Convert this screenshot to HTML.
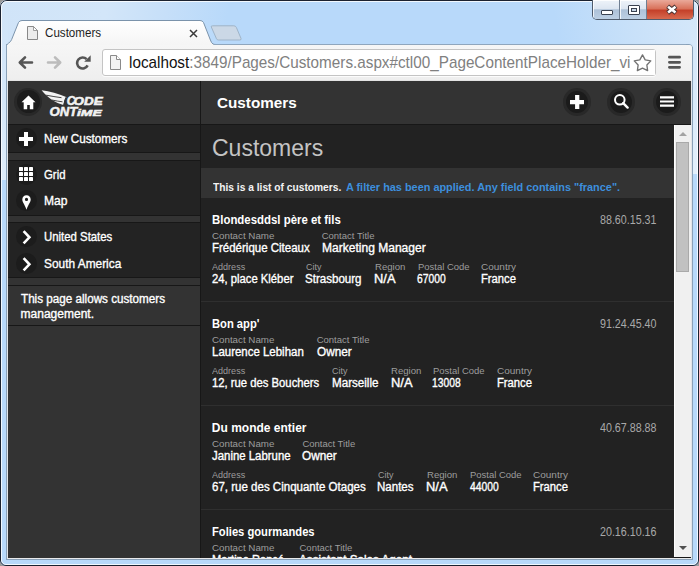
<!DOCTYPE html>
<html><head><meta charset="utf-8">
<style>
*{margin:0;padding:0;box-sizing:border-box}
html,body{width:699px;height:566px;overflow:hidden;background:#9a9a9a;font-family:"Liberation Sans",sans-serif}
.abs{position:absolute}
.t{position:absolute;white-space:nowrap}
</style></head><body>
<div class="abs" style="left:0;top:0;width:699px;height:566px;border-radius:7px 7px 6px 6px;overflow:hidden;background:#b8d9fa">
 <div class="abs" style="left:0;top:0;width:300px;height:44px;background:linear-gradient(100deg,#d0e4f8 0%,#d3e6f9 35%,#c6dff9 55%,rgba(184,217,250,0) 75%)"></div>
 <div class="abs" style="left:0;top:0;width:8px;height:180px;background:linear-gradient(180deg,#d0e4f8 0%,#d5e7f9 55%,#dfedfa 100%)"></div>
 <div class="abs" style="left:480px;top:0;width:219px;height:44px;background:linear-gradient(80deg,rgba(184,217,250,0) 0%,rgba(184,217,250,0) 35%,#c9e1f9 70%,#d6e8fa 100%)"></div>
 <div class="abs" style="left:691px;top:0;width:8px;height:174px;background:linear-gradient(180deg,#d2e6f9 0%,#d8e9fa 55%,#e3effb 100%)"></div>
</div>
<div class="abs" style="left:0;top:0;width:699px;height:566px;border:1px solid #1b2230;border-radius:7px 7px 6px 6px"></div>
<div class="abs" style="left:1px;top:1px;width:697px;height:564px;border:1px solid rgba(255,255,255,.8);border-radius:6px 6px 5px 5px"></div>
<div class="abs" style="left:592px;top:0;width:102px;height:20px;border:1px solid #505c6c;border-top:none;border-radius:0 0 5px 5px;overflow:hidden">
  <div class="abs" style="left:0;top:0;width:27px;height:19px;background:linear-gradient(#eef3f9 0,#dde6f1 45%,#aec2d8 52%,#bccfe3 100%);border-right:1px solid #6f7f92;box-shadow:inset 1px 1px 0 rgba(255,255,255,.8)"></div>
  <div class="abs" style="left:27px;top:0;width:27px;height:19px;background:linear-gradient(#eef3f9 0,#dde6f1 45%,#aec2d8 52%,#bccfe3 100%);border-right:1px solid #6f7f92;box-shadow:inset 1px 1px 0 rgba(255,255,255,.8)"></div>
  <div class="abs" style="left:54px;top:0;width:46px;height:19px;background:linear-gradient(#eaa99a 0,#d9735c 45%,#c5412a 55%,#d86a4f 100%)"></div>
</div>
<div class="abs" style="left:601px;top:10px;width:12px;height:5px;background:#fff;border:1px solid #3a4250;border-radius:1px"></div>
<div class="abs" style="left:628px;top:5px;width:12px;height:10px;background:#fff;border:1px solid #3a4250;border-radius:1px"><div class="abs" style="left:2px;top:2px;width:6px;height:4px;border:1px solid #3a4250;background:#c9d7e6"></div></div>
<svg class="abs" style="left:662px;top:2px" width="20" height="16" viewBox="0 0 20 16"><path d="M5.6 4.3 L14 10.9 M14 4.3 L5.6 10.9" stroke="#4b3434" stroke-width="4.6" stroke-linecap="butt"/><path d="M6.1 4.7 L13.5 10.5 M13.5 4.7 L6.1 10.5" stroke="#fff" stroke-width="2.6" stroke-linecap="butt"/></svg>
<svg class="abs" style="left:0;top:18px" width="260" height="30" viewBox="0 18 260 30">
  <defs><linearGradient id="tg" x1="0" y1="0" x2="0" y2="1"><stop offset="0" stop-color="#ffffff"/><stop offset="1" stop-color="#f4f4f4"/></linearGradient></defs>
  <path d="M6.5 47 Q6.5 44.5 8.5 43.2 Q10.8 41.8 11.6 39.6 L18.5 22.5 Q19.5 20.5 22 20.5 L200 20.5 Q202.5 20.5 203.5 22.5 L210.4 40 Q211.4 43 213 44 Q214 44.5 216 44.5 L216 47 Z" fill="url(#tg)"/>
  <path d="M6.5 48 L6.5 46.5 Q6.5 44.5 8.5 43.2 Q10.8 41.8 11.6 39.6 L18.5 22.5 Q19.5 20.5 22 20.5 L200 20.5 Q202.5 20.5 203.5 22.5 L210.4 40 Q211.4 43 213 44 Q214 44.5 216 44.5 L260 44.5" fill="none" stroke="#7b93ab" stroke-width="1"/>
  <path d="M211.3 27 Q210.8 25.8 212.5 25.8 L233.8 25.8 Q235.6 25.8 236.3 27.3 L241 38.4 Q241.6 40 239.8 40 L218.4 40 Q217 40 216.5 38.8 Z" fill="#cbd8e6" stroke="#9fb4c8" stroke-width="1"/>
</svg>
<svg class="abs" style="left:27px;top:26px" width="11" height="14" viewBox="0 0 11 14"><path d="M0.5 0.5 H6.5 L10.5 4.5 V13.5 H0.5 Z" fill="#ececec" stroke="#888"/><path d="M6.5 0.5 V4.5 H10.5 Z" fill="#fff" stroke="#888" stroke-width="0.8"/></svg>
<svg class="abs" style="left:189px;top:29px" width="9" height="9" viewBox="0 0 9 9"><path d="M1 1 L8 8 M8 1 L1 8" stroke="#3a3a3a" stroke-width="1.5"/></svg>
<div class="t" style="left:44.60px;top:24.70px;font-size:13px;line-height:16px;color:#1e1e1e;transform:scaleX(0.8926);transform-origin:0 0;">Customers</div>
<div class="abs" style="left:7px;top:45px;width:685px;height:36px;background:linear-gradient(#f6f6f6,#eeeeee)"></div>
<div class="abs" style="left:214px;top:44px;width:475px;height:1px;background:#8fa6bd"></div>
<div class="abs" style="left:8px;top:80px;width:683px;height:1px;background:#e3e3e3"></div>
<svg class="abs" style="left:17px;top:55px" width="17" height="15" viewBox="0 0 17 15"><path d="M15 7.5 H3 M8 2.3 L2.8 7.5 L8 12.7" fill="none" stroke="#565656" stroke-width="2.6" stroke-linecap="round" stroke-linejoin="round"/></svg>
<svg class="abs" style="left:46px;top:55px" width="17" height="15" viewBox="0 0 17 15"><path d="M2 7.5 H14 M9 2.3 L14.2 7.5 L9 12.7" fill="none" stroke="#bcbcbc" stroke-width="2.6" stroke-linecap="round" stroke-linejoin="round"/></svg>
<svg class="abs" style="left:74px;top:54px" width="18" height="16" viewBox="0 0 18 16"><path d="M12.6 5.2 A5.5 5.5 0 1 0 13.6 11.4" fill="none" stroke="#555" stroke-width="2.6"/><path d="M10.2 7.8 H16.7 V1.2 Z" fill="#555"/></svg>
<div class="abs" style="left:102px;top:49px;width:554px;height:27px;background:#fff;border:1px solid #c4c4c4;border-radius:3px;box-shadow:0 1px 0 rgba(255,255,255,.8)"></div>
<svg class="abs" style="left:110px;top:55px" width="11" height="15" viewBox="0 0 11 15"><path d="M0.5 0.5 H6.5 L10.5 4.5 V14.5 H0.5 Z" fill="#f3f3f3" stroke="#8a8a8a"/><path d="M6.5 0.5 V4.5 H10.5" fill="#fff" stroke="#8a8a8a"/></svg>
<div class="t" style="left:128.6px;top:52.91px;font-size:17px;line-height:20px;transform:scaleX(0.8979);transform-origin:0 0;color:#111">localhost<span style="color:#808080">:3849/Pages/Customers.aspx#ctl00_PageContentPlaceHolder_vi</span></div>
<div class="abs" style="left:630px;top:50px;width:25px;height:25px;background:#fff"></div>
<svg class="abs" style="left:632px;top:52.8px" width="22" height="20" viewBox="0 0 22 20"><path d="M10.50 1.90 L13.20 6.88 L18.77 7.91 L14.87 12.02 L15.61 17.64 L10.50 15.20 L5.39 17.64 L6.13 12.02 L2.23 7.91 L7.80 6.88 Z" fill="none" stroke="#727272" stroke-width="1.35" stroke-linejoin="round"/></svg>
<svg class="abs" style="left:666px;top:54px" width="16" height="16" viewBox="0 0 16 16"><path d="M3.4 3.2 H13.6 M3.4 8.3 H13.6 M3.4 13.3 H13.6" stroke="#555" stroke-width="2.8" stroke-linecap="round"/></svg>
<div class="abs" style="left:8px;top:81px;width:683px;height:477px;background:#333;overflow:hidden">
<div class="abs" style="left:0px;top:0px;width:683px;height:43px;background:#333;"></div>
<div class="abs" style="left:0px;top:43px;width:683px;height:1px;background:#171717;"></div>
<div class="abs" style="left:0px;top:44px;width:192px;height:27px;background:#232323;"></div>
<div class="abs" style="left:0px;top:71px;width:192px;height:1px;background:#171717;"></div>
<div class="abs" style="left:0px;top:79px;width:192px;height:1px;background:#171717;"></div>
<div class="abs" style="left:0px;top:80px;width:192px;height:54px;background:#232323;"></div>
<div class="abs" style="left:0px;top:134px;width:192px;height:1px;background:#171717;"></div>
<div class="abs" style="left:0px;top:141px;width:192px;height:1px;background:#171717;"></div>
<div class="abs" style="left:0px;top:142px;width:192px;height:54px;background:#232323;"></div>
<div class="abs" style="left:0px;top:196px;width:192px;height:1px;background:#171717;"></div>
<div class="abs" style="left:0px;top:204px;width:192px;height:1px;background:#171717;"></div>
<div class="abs" style="left:0px;top:244px;width:192px;height:1px;background:#171717;"></div>
<div class="abs" style="left:192px;top:0px;width:1px;height:477px;background:#171717;"></div>
<div class="abs" style="left:193px;top:44px;width:473px;height:433px;background:#222;"></div>
<div class="abs" style="left:193px;top:87px;width:473px;height:30px;background:#333;"></div>
<div class="abs" style="left:6px;top:6.700000000000003px;width:28px;height:28px;border-radius:50%;background:#282828"><div class="abs" style="left:2.5px;top:2.5px;width:23px;height:23px;border-radius:50%;background:#1c1c1c"></div></div>
<svg class="abs" style="left:12.5px;top:13.5px" width="15" height="15" viewBox="0 0 15 15"><path d="M7.5 0.5 L14.5 7.2 H12.3 V14.3 H8.8 V10 H6.2 V14.3 H2.7 V7.2 H0.5 Z" fill="#fff"/></svg>
<svg class="abs" style="left:32px;top:5px" width="66" height="34" viewBox="0 0 66 34">
 <path d="M1.6 4.3 C10 5.4 18 7.6 26.8 11.3 L24.6 14.2 L23.4 19 C15.5 17 8.5 12.5 1.6 4.3 Z" fill="#f4f4f4"/>
 <path d="M6.2 9.2 Q14 10.7 21.5 11.7 M11.8 14 Q17.5 15.2 22.5 15.8" fill="none" stroke="#333" stroke-width="0.9"/>
 <path d="M26.4 10.8 Q24.4 14 23.8 19.4" fill="none" stroke="#333" stroke-width="1.1"/>
 <g font-family="Liberation Sans" font-weight="bold" font-style="italic" fill="#f2f2f2" stroke="#f2f2f2" stroke-width="0.55">
 <text x="26.8" y="18.9" font-size="12.4" textLength="8.5" lengthAdjust="spacingAndGlyphs">C</text>
 <text x="33.6" y="18.9" font-size="10.2" textLength="29" lengthAdjust="spacingAndGlyphs">ODE</text>
 <text x="9.6" y="29.7" font-size="13" textLength="27.8" lengthAdjust="spacingAndGlyphs">ONT</text>
 <text x="37" y="29.7" font-size="9.6" textLength="24.7" lengthAdjust="spacingAndGlyphs">iME</text>
 </g>
</svg>
<div class="abs" style="left:7.5px;top:47.30000000000001px;width:21.0px;height:21.0px;border-radius:50%;background:#1c1c1c"></div>
<div class="abs" style="left:7.5px;top:82.5px;width:21.0px;height:21.0px;border-radius:50%;background:#1c1c1c"></div>
<div class="abs" style="left:7.5px;top:109.30000000000001px;width:21.0px;height:21.0px;border-radius:50%;background:#1c1c1c"></div>
<div class="abs" style="left:7.5px;top:145.4px;width:21.0px;height:21.0px;border-radius:50%;background:#1c1c1c"></div>
<div class="abs" style="left:7.5px;top:172.10000000000002px;width:21.0px;height:21.0px;border-radius:50%;background:#1c1c1c"></div>
<svg class="abs" style="left:11px;top:51px" width="14" height="14" viewBox="0 0 14 14"><path d="M5 0 H9 V5 H14 V9 H9 V14 H5 V9 H0 V5 H5 Z" fill="#fff"/></svg>
<svg class="abs" style="left:11px;top:86px" width="15" height="15" viewBox="0 0 15 15"><g fill="#fff"><rect x="0" y="0" width="4" height="4" rx="0.6"/><rect x="5" y="0" width="4" height="4" rx="0.6"/><rect x="10" y="0" width="4" height="4" rx="0.6"/><rect x="0" y="5" width="4" height="4" rx="0.6"/><rect x="5" y="5" width="4" height="4" rx="0.6"/><rect x="10" y="5" width="4" height="4" rx="0.6"/><rect x="0" y="10" width="4" height="4" rx="0.6"/><rect x="5" y="10" width="4" height="4" rx="0.6"/><rect x="10" y="10" width="4" height="4" rx="0.6"/></g></svg>
<svg class="abs" style="left:13.6px;top:113.5px" width="9" height="15" viewBox="0 0 9 15"><path d="M4.5 0.3 C7 0.3 8.7 2.2 8.7 4.5 C8.7 7 6.3 9.5 4.5 14.7 C2.7 9.5 0.3 7 0.3 4.5 C0.3 2.2 2 0.3 4.5 0.3 Z M4.5 2.8 A1.6 1.6 0 1 0 4.5 6 A1.6 1.6 0 1 0 4.5 2.8 Z" fill="#fff" fill-rule="evenodd"/></svg>
<svg class="abs" style="left:14px;top:148.5px" width="10" height="15" viewBox="0 0 10 15"><path d="M1.6 1.2 L7.4 7.3 L1.6 13.4" fill="none" stroke="#fff" stroke-width="2.6"/></svg>
<svg class="abs" style="left:14px;top:175.5px" width="10" height="15" viewBox="0 0 10 15"><path d="M1.6 1.2 L7.4 7.3 L1.6 13.4" fill="none" stroke="#fff" stroke-width="2.6"/></svg>
<div class="t" style="left:36.30px;top:49.70px;font-size:13px;line-height:16px;color:#fff;transform:scaleX(0.9009);transform-origin:0 0;-webkit-text-stroke:0.35px #fff;">New Customers</div>
<div class="t" style="left:36.30px;top:85.60px;font-size:13px;line-height:16px;color:#fff;transform:scaleX(0.8754);transform-origin:0 0;-webkit-text-stroke:0.35px #fff;">Grid</div>
<div class="t" style="left:36.30px;top:112.40px;font-size:13px;line-height:16px;color:#fff;transform:scaleX(0.9293);transform-origin:0 0;-webkit-text-stroke:0.35px #fff;">Map</div>
<div class="t" style="left:36.30px;top:148.00px;font-size:13px;line-height:16px;color:#fff;transform:scaleX(0.8751);transform-origin:0 0;-webkit-text-stroke:0.35px #fff;">United States</div>
<div class="t" style="left:36.30px;top:174.80px;font-size:13px;line-height:16px;color:#fff;transform:scaleX(0.9143);transform-origin:0 0;-webkit-text-stroke:0.35px #fff;">South America</div>
<div class="t" style="left:12.60px;top:211.04px;font-size:12px;line-height:14px;color:#fff;transform:scaleX(0.9726);transform-origin:0 0;-webkit-text-stroke:0.35px #fff;">This page allows customers</div>
<div class="t" style="left:12.60px;top:226.14px;font-size:12px;line-height:14px;color:#fff;-webkit-text-stroke:0.35px #fff;">management.</div>
<div class="t" style="left:209.20px;top:13.30px;font-size:15px;line-height:18px;color:#fff;transform:scaleX(1.0184);transform-origin:0 0;font-weight:bold;">Customers</div>
<div class="abs" style="left:555.2px;top:7.0px;width:27.6px;height:27.6px;border-radius:50%;background:#282828"><div class="abs" style="left:2.8px;top:2.8px;width:22px;height:22px;border-radius:50%;background:#1b1b1b"></div></div>
<div class="abs" style="left:599.2px;top:7.0px;width:27.6px;height:27.6px;border-radius:50%;background:#282828"><div class="abs" style="left:2.8px;top:2.8px;width:22px;height:22px;border-radius:50%;background:#1b1b1b"></div></div>
<div class="abs" style="left:645.2px;top:7.0px;width:27.6px;height:27.6px;border-radius:50%;background:#282828"><div class="abs" style="left:2.8px;top:2.8px;width:22px;height:22px;border-radius:50%;background:#1b1b1b"></div></div>
<svg class="abs" style="left:561.8px;top:13.799999999999997px" width="14.4" height="14.4" viewBox="0 0 15 15"><path d="M5.3 0 H9.7 V5.3 H15 V9.7 H9.7 V15 H5.3 V9.7 H0 V5.3 H5.3 Z" fill="#fff"/></svg>
<svg class="abs" style="left:605px;top:12px" width="16" height="16" viewBox="0 0 16 16"><circle cx="6.8" cy="6.8" r="4.8" fill="none" stroke="#fff" stroke-width="2"/><path d="M10.2 10.2 L14.6 14.6" stroke="#fff" stroke-width="2.4" stroke-linecap="round"/></svg>
<svg class="abs" style="left:652px;top:14px" width="14" height="13" viewBox="0 0 14 13"><path d="M0 2.3 H14 M0 6.5 H14 M0 10.7 H14" stroke="#fff" stroke-width="2.2"/></svg>
<div class="t" style="left:204.00px;top:51.98px;font-size:24px;line-height:29px;color:#c4c4c4;transform:scaleX(0.9584);transform-origin:0 0;">Customers</div>
<div class="t" style="left:205.00px;top:99.02px;font-size:11.5px;line-height:14px;color:#f4f4f4;transform:scaleX(0.8883);transform-origin:0 0;font-weight:bold;">This is a list of customers.</div>
<div class="t" style="left:338.40px;top:99.02px;font-size:11.5px;line-height:14px;color:#3d8fdd;transform:scaleX(0.9474);transform-origin:0 0;font-weight:bold;">A filter has been applied. Any field contains "france".</div>
<div class="t" style="left:203.80px;top:131.64px;font-size:12px;line-height:14px;color:#fff;transform:scaleX(0.9515);transform-origin:0 0;font-weight:bold;">Blondesddsl père et fils</div>
<div class="t" style="left:592.30px;top:131.94px;font-size:12px;line-height:14px;color:#a9a9a9;transform:scaleX(0.8913);transform-origin:0 0;">88.60.15.31</div>
<div class="t" style="left:204.00px;top:149.31px;font-size:9.5px;line-height:11px;color:#9d9d9d;transform:scaleX(1.0277);transform-origin:0 0;">Contact Name</div>
<div class="t" style="left:203.80px;top:159.94px;font-size:12px;line-height:14px;color:#fff;transform:scaleX(0.9573);transform-origin:0 0;-webkit-text-stroke:0.35px #fff;">Frédérique Citeaux</div>
<div class="t" style="left:313.70px;top:149.31px;font-size:9.5px;line-height:11px;color:#9d9d9d;">Contact Title</div>
<div class="t" style="left:313.50px;top:159.94px;font-size:12px;line-height:14px;color:#fff;transform:scaleX(1.0031);transform-origin:0 0;-webkit-text-stroke:0.35px #fff;">Marketing Manager</div>
<div class="t" style="left:204.00px;top:180.21px;font-size:9.5px;line-height:11px;color:#9d9d9d;transform:scaleX(0.9526);transform-origin:0 0;">Address</div>
<div class="t" style="left:203.80px;top:190.84px;font-size:12px;line-height:14px;color:#fff;transform:scaleX(0.9386);transform-origin:0 0;-webkit-text-stroke:0.35px #fff;">24, place Kléber</div>
<div class="t" style="left:297.60px;top:180.21px;font-size:9.5px;line-height:11px;color:#9d9d9d;transform:scaleX(0.9413);transform-origin:0 0;">City</div>
<div class="t" style="left:297.40px;top:190.84px;font-size:12px;line-height:14px;color:#fff;transform:scaleX(0.9625);transform-origin:0 0;-webkit-text-stroke:0.35px #fff;">Strasbourg</div>
<div class="t" style="left:366.60px;top:180.21px;font-size:9.5px;line-height:11px;color:#9d9d9d;transform:scaleX(1.0098);transform-origin:0 0;">Region</div>
<div class="t" style="left:366.40px;top:190.84px;font-size:12px;line-height:14px;color:#fff;transform:scaleX(1.0748);transform-origin:0 0;-webkit-text-stroke:0.35px #fff;">N/A</div>
<div class="t" style="left:409.60px;top:180.21px;font-size:9.5px;line-height:11px;color:#9d9d9d;transform:scaleX(0.9951);transform-origin:0 0;">Postal Code</div>
<div class="t" style="left:409.40px;top:190.84px;font-size:12px;line-height:14px;color:#fff;transform:scaleX(0.8571);transform-origin:0 0;-webkit-text-stroke:0.35px #fff;">67000</div>
<div class="t" style="left:473.40px;top:180.21px;font-size:9.5px;line-height:11px;color:#9d9d9d;transform:scaleX(1.0522);transform-origin:0 0;">Country</div>
<div class="t" style="left:473.20px;top:190.84px;font-size:12px;line-height:14px;color:#fff;transform:scaleX(0.9371);transform-origin:0 0;-webkit-text-stroke:0.35px #fff;">France</div>
<div class="t" style="left:203.80px;top:235.64px;font-size:12px;line-height:14px;color:#fff;transform:scaleX(0.9322);transform-origin:0 0;font-weight:bold;">Bon app'</div>
<div class="t" style="left:592.30px;top:235.94px;font-size:12px;line-height:14px;color:#a9a9a9;transform:scaleX(0.8913);transform-origin:0 0;">91.24.45.40</div>
<div class="t" style="left:204.00px;top:253.31px;font-size:9.5px;line-height:11px;color:#9d9d9d;transform:scaleX(1.0277);transform-origin:0 0;">Contact Name</div>
<div class="t" style="left:203.80px;top:263.94px;font-size:12px;line-height:14px;color:#fff;transform:scaleX(0.9554);transform-origin:0 0;-webkit-text-stroke:0.35px #fff;">Laurence Lebihan</div>
<div class="t" style="left:308.70px;top:253.31px;font-size:9.5px;line-height:11px;color:#9d9d9d;">Contact Title</div>
<div class="t" style="left:308.50px;top:263.94px;font-size:12px;line-height:14px;color:#fff;transform:scaleX(0.9818);transform-origin:0 0;-webkit-text-stroke:0.35px #fff;">Owner</div>
<div class="t" style="left:204.00px;top:284.21px;font-size:9.5px;line-height:11px;color:#9d9d9d;transform:scaleX(0.9526);transform-origin:0 0;">Address</div>
<div class="t" style="left:203.80px;top:294.84px;font-size:12px;line-height:14px;color:#fff;transform:scaleX(0.9398);transform-origin:0 0;-webkit-text-stroke:0.35px #fff;">12, rue des Bouchers</div>
<div class="t" style="left:323.70px;top:284.21px;font-size:9.5px;line-height:11px;color:#9d9d9d;transform:scaleX(0.9413);transform-origin:0 0;">City</div>
<div class="t" style="left:323.50px;top:294.84px;font-size:12px;line-height:14px;color:#fff;transform:scaleX(0.9685);transform-origin:0 0;-webkit-text-stroke:0.35px #fff;">Marseille</div>
<div class="t" style="left:382.70px;top:284.21px;font-size:9.5px;line-height:11px;color:#9d9d9d;transform:scaleX(1.0098);transform-origin:0 0;">Region</div>
<div class="t" style="left:382.50px;top:294.84px;font-size:12px;line-height:14px;color:#fff;transform:scaleX(1.0748);transform-origin:0 0;-webkit-text-stroke:0.35px #fff;">N/A</div>
<div class="t" style="left:424.60px;top:284.21px;font-size:9.5px;line-height:11px;color:#9d9d9d;transform:scaleX(0.9951);transform-origin:0 0;">Postal Code</div>
<div class="t" style="left:424.40px;top:294.84px;font-size:12px;line-height:14px;color:#fff;transform:scaleX(0.8571);transform-origin:0 0;-webkit-text-stroke:0.35px #fff;">13008</div>
<div class="t" style="left:489.10px;top:284.21px;font-size:9.5px;line-height:11px;color:#9d9d9d;transform:scaleX(1.0522);transform-origin:0 0;">Country</div>
<div class="t" style="left:488.90px;top:294.84px;font-size:12px;line-height:14px;color:#fff;transform:scaleX(0.9371);transform-origin:0 0;-webkit-text-stroke:0.35px #fff;">France</div>
<div class="t" style="left:203.80px;top:339.64px;font-size:12px;line-height:14px;color:#fff;font-weight:bold;">Du monde entier</div>
<div class="t" style="left:592.30px;top:339.94px;font-size:12px;line-height:14px;color:#a9a9a9;transform:scaleX(0.8913);transform-origin:0 0;">40.67.88.88</div>
<div class="t" style="left:204.00px;top:357.31px;font-size:9.5px;line-height:11px;color:#9d9d9d;transform:scaleX(1.0277);transform-origin:0 0;">Contact Name</div>
<div class="t" style="left:203.80px;top:367.94px;font-size:12px;line-height:14px;color:#fff;transform:scaleX(0.9500);transform-origin:0 0;-webkit-text-stroke:0.35px #fff;">Janine Labrune</div>
<div class="t" style="left:294.40px;top:357.31px;font-size:9.5px;line-height:11px;color:#9d9d9d;">Contact Title</div>
<div class="t" style="left:294.20px;top:367.94px;font-size:12px;line-height:14px;color:#fff;transform:scaleX(0.9818);transform-origin:0 0;-webkit-text-stroke:0.35px #fff;">Owner</div>
<div class="t" style="left:204.00px;top:388.21px;font-size:9.5px;line-height:11px;color:#9d9d9d;transform:scaleX(0.9526);transform-origin:0 0;">Address</div>
<div class="t" style="left:203.80px;top:398.84px;font-size:12px;line-height:14px;color:#fff;transform:scaleX(0.9600);transform-origin:0 0;-webkit-text-stroke:0.35px #fff;">67, rue des Cinquante Otages</div>
<div class="t" style="left:369.50px;top:388.21px;font-size:9.5px;line-height:11px;color:#9d9d9d;transform:scaleX(0.9413);transform-origin:0 0;">City</div>
<div class="t" style="left:369.30px;top:398.84px;font-size:12px;line-height:14px;color:#fff;transform:scaleX(0.9600);transform-origin:0 0;-webkit-text-stroke:0.35px #fff;">Nantes</div>
<div class="t" style="left:418.50px;top:388.21px;font-size:9.5px;line-height:11px;color:#9d9d9d;transform:scaleX(1.0098);transform-origin:0 0;">Region</div>
<div class="t" style="left:418.30px;top:398.84px;font-size:12px;line-height:14px;color:#fff;transform:scaleX(1.0748);transform-origin:0 0;-webkit-text-stroke:0.35px #fff;">N/A</div>
<div class="t" style="left:461.80px;top:388.21px;font-size:9.5px;line-height:11px;color:#9d9d9d;transform:scaleX(0.9951);transform-origin:0 0;">Postal Code</div>
<div class="t" style="left:461.60px;top:398.84px;font-size:12px;line-height:14px;color:#fff;transform:scaleX(0.8571);transform-origin:0 0;-webkit-text-stroke:0.35px #fff;">44000</div>
<div class="t" style="left:525.10px;top:388.21px;font-size:9.5px;line-height:11px;color:#9d9d9d;transform:scaleX(1.0522);transform-origin:0 0;">Country</div>
<div class="t" style="left:524.90px;top:398.84px;font-size:12px;line-height:14px;color:#fff;transform:scaleX(0.9371);transform-origin:0 0;-webkit-text-stroke:0.35px #fff;">France</div>
<div class="t" style="left:203.80px;top:443.64px;font-size:12px;line-height:14px;color:#fff;transform:scaleX(0.9325);transform-origin:0 0;font-weight:bold;">Folies gourmandes</div>
<div class="t" style="left:592.30px;top:443.94px;font-size:12px;line-height:14px;color:#a9a9a9;transform:scaleX(0.8913);transform-origin:0 0;">20.16.10.16</div>
<div class="t" style="left:204.00px;top:461.31px;font-size:9.5px;line-height:11px;color:#9d9d9d;transform:scaleX(1.0277);transform-origin:0 0;">Contact Name</div>
<div class="t" style="left:203.80px;top:471.94px;font-size:12px;line-height:14px;color:#fff;transform:scaleX(0.9227);transform-origin:0 0;-webkit-text-stroke:0.35px #fff;">Martine Rancé</div>
<div class="t" style="left:291.50px;top:461.31px;font-size:9.5px;line-height:11px;color:#9d9d9d;">Contact Title</div>
<div class="t" style="left:291.30px;top:471.94px;font-size:12px;line-height:14px;color:#fff;transform:scaleX(0.9736);transform-origin:0 0;-webkit-text-stroke:0.35px #fff;">Assistant Sales Agent</div>
<div class="abs" style="left:193px;top:220px;width:473px;height:1px;background:#2f2f2f;"></div>
<div class="abs" style="left:193px;top:324px;width:473px;height:1px;background:#2f2f2f;"></div>
<div class="abs" style="left:193px;top:428px;width:473px;height:1px;background:#2f2f2f;"></div>
<div class="abs" style="left:666px;top:476px;width:17px;height:1px;background:#161616;"></div>
<div class="abs" style="left:666px;top:44px;width:17px;height:432px;background:#f0f0f0;border-left:1px solid #fdfdfd"></div>
<svg class="abs" style="left:671px;top:50px" width="8" height="6" viewBox="0 0 8 6"><path d="M0 5 L4 1 L8 5 Z" fill="#a3a3a3"/></svg>
<svg class="abs" style="left:671px;top:464px" width="8" height="6" viewBox="0 0 8 6"><path d="M0 1 L4 5 L8 1 Z" fill="#505050"/></svg>
<div class="abs" style="left:668px;top:61px;width:13px;height:130px;background:#c1c1c1;border:1px solid #a9a9a9"></div>
</div>
<div class="abs" style="left:7px;top:558px;width:685px;height:1px;background:#e8eaec"></div>
<div class="abs" style="left:7px;top:81px;width:1px;height:478px;background:#e2e4e7"></div>
<div class="abs" style="left:691px;top:81px;width:1px;height:478px;background:#e2e4e7"></div>
<div class="abs" style="left:6px;top:44px;width:1px;height:516px;background:#8aa1b8"></div>
<div class="abs" style="left:692px;top:47px;width:1px;height:513px;background:#8aa1b8"></div>
<svg class="abs" style="left:686px;top:44px" width="7" height="5" viewBox="0 0 7 5"><path d="M0 0.5 H3 Q6.5 0.5 6.5 4 V5" fill="none" stroke="#8aa1b8"/><path d="M0 1 H3 Q6 1 6 4 V5 H0 Z" fill="#f6f6f6"/></svg>
<div class="abs" style="left:6px;top:559px;width:687px;height:1px;background:#8aa1b8"></div>
</body></html>
